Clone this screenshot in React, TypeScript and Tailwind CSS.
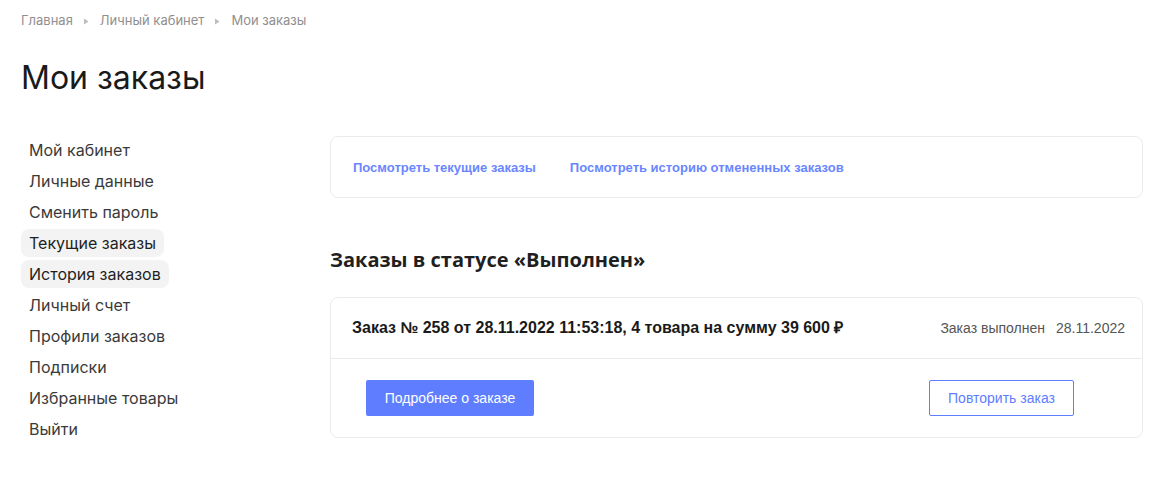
const crumbs = ['Главная', 'Личный кабинет', 'Мои заказы'];

const menu = [
  { label: 'Мой кабинет' },
  { label: 'Личные данные' },
  { label: 'Сменить пароль' },
  { label: 'Текущие заказы', active: true },
  { label: 'История заказов', active: true },
  { label: 'Личный счет' },
  { label: 'Профили заказов' },
  { label: 'Подписки' },
  { label: 'Избранные товары' },
  { label: 'Выйти' },
];

const inter = "font-['Inter',sans-serif]";
const arial = "font-['Liberation_Sans',Arial,sans-serif]";

// Small grey triangle between breadcrumb items
const CrumbArrow = () => (
  <svg width="5" height="7" viewBox="0 0 5 7" className="mx-[11px] shrink-0">
    <path d="M0 0.5 L4.5 3.5 L0 6.5 Z" fill="#bdbdbd" />
  </svg>
);

const Sidebar = () => (
  <nav className={`w-[309px] shrink-0 flex flex-col ${inter}`}>
    {menu.map((item) => (
      <div key={item.label} className="flex h-[31px] items-center">
        <span
          className={
            item.active
              ? 'rounded-lg bg-[#f3f3f3] px-2 py-[3px] text-[16px] leading-[22px] text-[#1f1f1f]'
              : 'px-2 text-[16px] leading-[22px] text-[#3a3a3a]'
          }
        >
          {item.label}
        </span>
      </div>
    ))}
  </nav>
);

const OrderCard = () => (
  <div className="rounded-lg border border-[#ebebeb]">
    <div className={`flex h-[61px] items-center justify-between border-b border-[#ebebeb] pl-[21px] pr-[17px] ${arial}`}>
      <span className="text-[16px] font-bold text-[#1a1a1a]">
        Заказ № 258 от 28.11.2022 11:53:18, 4 товара на сумму 39 600 ₽
      </span>
      <span className="flex gap-[11px] text-[14px] text-[#555]">
        <span>Заказ выполнен</span>
        <span>28.11.2022</span>
      </span>
    </div>
    <div className={`flex items-center justify-between pt-[21px] pb-[21px] pl-[35px] pr-[68px] ${arial}`}>
      <button className="h-[36px] w-[168px] rounded-[2px] bg-[#5e7dff] text-[14px] text-white">
        Подробнее о заказе
      </button>
      <button className="h-[36px] w-[145px] rounded-[2px] border border-[#5e7dff] text-[14px] text-[#5e7dff]">
        Повторить заказ
      </button>
    </div>
  </div>
);

export default function App() {
  return (
    <div className="min-h-screen bg-white pl-[21px] pr-[19px] pb-10">
      <div className={`flex h-[42px] items-center text-[13px] text-[#8f8f8f] ${inter}`}>
        {crumbs.map((c, i) => (
          <span key={c} className="flex items-center">
            {i > 0 && <CrumbArrow />}
            {c}
          </span>
        ))}
      </div>

      <h1 className={`mt-[17px] text-[32px] leading-[38px] text-[#1a1a1a] ${inter}`}>Мои заказы</h1>

      <div className="mt-[37px] flex">
        <Sidebar />

        <div className="flex-1 mt-[2px]">
          <div className={`flex h-[62px] items-center gap-[34px] rounded-lg border border-[#ebebeb] px-[22px] pt-px ${arial}`}>
            <a className="text-[13px] font-bold text-[#6a86ff]">Посмотреть текущие заказы</a>
            <a className="text-[13px] font-bold text-[#6a86ff]">Посмотреть историю отмененных заказов</a>
          </div>

          <h2 className="mt-[48px] mb-[23px] font-['Open_Sans',sans-serif] text-[20px] font-bold leading-[28px] text-[#1f1f1f]">
            Заказы в статусе «Выполнен»
          </h2>

          <OrderCard />
        </div>
      </div>
    </div>
  );
}
